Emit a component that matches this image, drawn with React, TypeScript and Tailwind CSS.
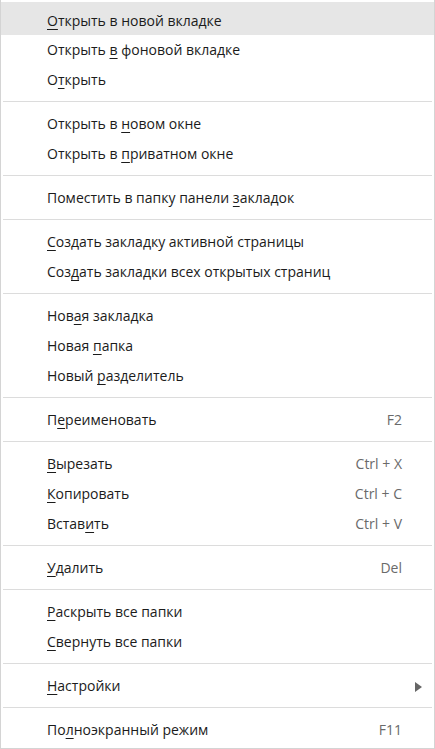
import React from "react";

type Item = { pre: string; u: string; post: string; sc?: string; arrow?: boolean; active?: boolean };
type Entry = Item | "sep";

const entries: Entry[] = [
  { pre: "", u: "О", post: "ткрыть в новой вкладке", active: true },
  { pre: "Открыть ", u: "в", post: " фоновой вкладке" },
  { pre: "О", u: "т", post: "крыть" },
  "sep",
  { pre: "Открыть в ", u: "н", post: "овом окне" },
  { pre: "Открыть в ", u: "п", post: "риватном окне" },
  "sep",
  { pre: "Поместить в папку панели ", u: "з", post: "акладок" },
  "sep",
  { pre: "", u: "С", post: "оздать закладку активной страницы" },
  { pre: "Соз", u: "д", post: "ать закладки всех открытых страниц" },
  "sep",
  { pre: "Нов", u: "а", post: "я закладка" },
  { pre: "Новая ", u: "п", post: "апка" },
  { pre: "Новый ", u: "р", post: "азделитель" },
  "sep",
  { pre: "П", u: "е", post: "реименовать", sc: "F2" },
  "sep",
  { pre: "", u: "В", post: "ырезать", sc: "Ctrl + X" },
  { pre: "", u: "К", post: "опировать", sc: "Ctrl + C" },
  { pre: "Встав", u: "и", post: "ть", sc: "Ctrl + V" },
  "sep",
  { pre: "", u: "У", post: "далить", sc: "Del" },
  "sep",
  { pre: "", u: "Р", post: "аскрыть все папки" },
  { pre: "", u: "С", post: "вернуть все папки" },
  "sep",
  { pre: "", u: "Н", post: "астройки", arrow: true },
  "sep",
  { pre: "По", u: "л", post: "ноэкранный режим", sc: "F11" },
];

export default function App() {
  return (
    <div
      className="w-[435px] h-[749px] bg-white border-l border-r border-b border-[#d4d4d4] pt-[2px] overflow-hidden text-[#1b1b1b]"
      style={{ fontFamily: '"Segoe UI", "Open Sans", "Noto Sans", sans-serif' }}
    >
      {entries.map((e, i) => {
        if (e === "sep") {
          return <div key={i} className="mx-[2px] mt-[6px] mb-[7px] h-px bg-[#dcdcdc]" />;
        }
        return (
          <div
            key={i}
            className={
              "flex items-center justify-between pl-[46px] text-[14px] leading-[30px] " +
              (e.active ? "h-[33px] pt-[4px] bg-[#e6e6e6] " : "h-[30px] ") +
              (e.arrow ? "pr-[11px]" : "pr-[32px]")
            }
          >
            <span className="whitespace-nowrap">
              {e.pre}
              <u className="underline underline-offset-[3px] decoration-1">{e.u}</u>
              {e.post}
            </span>
            {e.sc && <span className="text-[#6a6a6a] whitespace-nowrap">{e.sc}</span>}
            {e.arrow && (
              <svg width="8" height="10" viewBox="0 0 8 10" className="mt-[1px]">
                <path d="M0 0 L7 5 L0 10 Z" fill="#666" />
              </svg>
            )}
          </div>
        );
      })}
    </div>
  );
}
